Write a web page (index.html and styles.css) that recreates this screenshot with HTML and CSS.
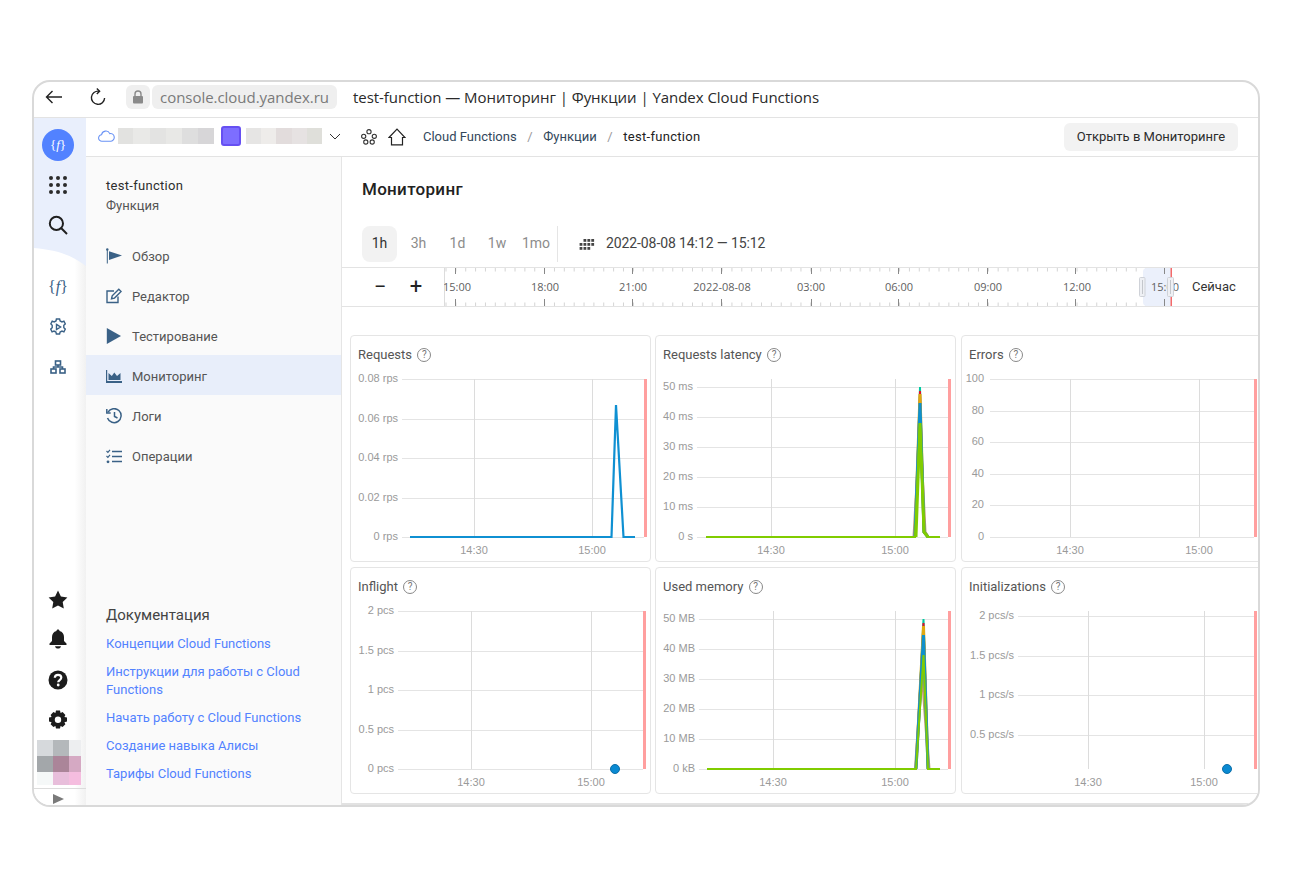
FILE: index.html
```html
<!DOCTYPE html>
<html lang="ru">
<head>
<meta charset="utf-8">
<title>test-function — Мониторинг</title>
<link rel="stylesheet" href="styles.css">
</head>
<body>
<div class="window">
  <header class="chrome">
    <svg class="chrome-back" width="18" height="14" viewBox="0 0 18 14"><path d="M17 7H1.500M7.500 1 1.500 7l6 6" class="stroke-dark"/></svg>
    <svg class="chrome-reload" width="16" height="18" viewBox="0 0 16 18"><path d="M9 3.200A6.600 6.600 0 1 0 14.600 10" class="stroke-dark"/><path d="M6.800.6 9.600 3.200 6.800 6" class="stroke-dark"/></svg>
    <span class="lock-chip"><svg width="12" height="14" viewBox="0 0 12 14"><path d="M3 6V4a3 3 0 0 1 6 0v2" fill="none" stroke="#8a8a8a" stroke-width="1.4"/><rect x="1" y="6" width="10" height="7.500" rx="1" fill="#8a8a8a"/></svg></span>
    <span class="url-chip">console.cloud.yandex.ru</span>
    <span class="tab-title">test-function — Мониторинг | Функции | Yandex Cloud Functions</span>
  </header>
  <div class="app">
    <nav class="rail">
      <svg class="rail-wave" width="52" height="150" viewBox="0 0 52 150"><path d="M0 0H52V148C36 136 22 132 0 130Z" fill="#e9effc"/></svg>
      <div class="rail-top">
        <span class="rail-logo">{<i>f</i>}</span>
        <span class="rail-item"><svg width="20" height="20" viewBox="0 0 20 20" fill="#2b2b2b"><circle cx="3" cy="3" r="2"/><circle cx="10" cy="3" r="2"/><circle cx="17" cy="3" r="2"/><circle cx="3" cy="10" r="2"/><circle cx="10" cy="10" r="2"/><circle cx="17" cy="10" r="2"/><circle cx="3" cy="17" r="2"/><circle cx="10" cy="17" r="2"/><circle cx="17" cy="17" r="2"/></svg></span>
        <span class="rail-item"><svg width="20" height="20" viewBox="0 0 20 20" fill="none" stroke="#1f1f1f" stroke-width="2"><circle cx="8.400" cy="8.400" r="6.600"/><path d="M13.300 13.300 19 19"/></svg></span>
        <span class="rail-item rail-first"><span class="rail-func">{<i>f</i>}</span></span>
        <span class="rail-item"><svg width="16" height="18" viewBox="0 0 16 18" fill="none" stroke="#3a6186" stroke-width="1.4"><path d="M6.400 1h3.200l.5 2 1.900.9 1.900-.7 1.400 2.700-1.500 1.400v2.400l1.500 1.400-1.400 2.700-1.900-.7-1.900.9-.5 2H6.400l-.5-2-1.900-.9-1.900.7-1.400-2.700 1.500-1.400V7.300L.8 5.900l1.400-2.700 1.900.7L6 3z"/><path d="M6.500 6.400 10.600 9l-4.100 2.600z"/></svg></span>
        <span class="rail-item"><svg width="16" height="14" viewBox="0 0 16 14" fill="none" stroke="#3a6186" stroke-width="1.6"><rect x="5.500" y="1" width="5" height="4"/><rect x="1" y="9" width="5" height="4"/><rect x="10" y="9" width="5" height="4"/><path d="M8 5v2M3.500 9V7h9v2"/></svg></span>
      </div>
      <div class="rail-bottom">
        <span class="rail-item"><svg width="20" height="19" viewBox="0 0 20 19" fill="#1c1c1c"><path d="m10 .6 2.900 5.900 6.500.9-4.700 4.600 1.100 6.400L10 15.400l-5.800 3 1.100-6.400L.6 7.400l6.500-.9z"/></svg></span>
        <span class="rail-item"><svg width="18" height="20" viewBox="0 0 18 20" fill="#1c1c1c"><path d="M9 .5c.9 0 1.500.6 1.500 1.400C13.500 2.600 15 5 15 8v4l2.500 2.500V16H.5v-1.500L3 12V8c0-3 1.500-5.400 4.500-6.100C7.500 1.100 8.100.5 9 .5Z"/><path d="M6 17.200h6C11.700 18.700 10.500 19.600 9 19.600s-2.700-.9-3-2.400Z"/></svg></span>
        <span class="rail-item rail-help"><svg width="20" height="20" viewBox="0 0 20 20"><circle cx="10" cy="10" r="9.500" fill="#1c1c1c"/><path d="M6.800 7.700C6.900 5.700 8.200 4.800 10 4.800c1.900 0 3.300 1.100 3.300 2.800 0 2.500-3.100 2.500-3.100 4.700" fill="none" stroke="#fff" stroke-width="2.200"/><circle cx="10.200" cy="15" r="1.400" fill="#fff"/></svg></span>
        <span class="rail-item"><svg width="20" height="20" viewBox="0 0 20 20"><path fill="#1c1c1c" d="M8 .5h4l.6 2.500 2-.9 2.800 2.800-1 2 2.600.7v4l-2.600.6 1 2.100-2.800 2.800-2-1-.6 2.400H8l-.6-2.400-2 1-2.800-2.800 1-2.100L1 11.600v-4l2.600-.7-1-2 2.800-2.800 2 .9z"/><circle cx="10" cy="9.700" r="3.200" fill="#fff"/></svg></span>
        <div class="avatar">
          <i class="a1"></i><i class="a2"></i><i class="a3"></i>
          <i class="a4"></i><i class="a5"></i><i class="a6"></i>
          <i class="a7"></i><i class="a8"></i><i class="a9"></i>
        </div>
        <div class="rail-expand"><svg width="11" height="10" viewBox="0 0 11 10"><path d="M0 0 11 5 0 10z" fill="#7a7a7a"/></svg></div>
      </div>
    </nav>
    <div class="content">
      <div class="topbar">
        <svg class="cloud" width="17" height="12" viewBox="0 0 17 12"><path d="M4 11.200A3.200 3.200 0 0 1 3.600 4.800 4.300 4.300 0 0 1 11.800 3.600 3.800 3.800 0 0 1 13 11.200Z" fill="none" stroke="#6a93f5" stroke-width="1.100"/></svg>
        <span class="blur blur-a"></span>
        <span class="folder-mark"></span>
        <span class="blur blur-b"></span>
        <svg class="chevron" width="12" height="7" viewBox="0 0 12 7"><path d="m1 1 5 5 5-5" fill="none" stroke="#333" stroke-width="1"/></svg>
        <svg class="flower" width="16" height="16" viewBox="0 0 16 16" fill="none" stroke="#333" stroke-width="1.100"><circle cx="8" cy="2.700" r="2.100"/><circle cx="2.700" cy="7.300" r="2.100"/><circle cx="13.300" cy="7.300" r="2.100"/><circle cx="4.800" cy="13" r="2.100"/><circle cx="11.200" cy="13" r="2.100"/></svg>
        <svg class="home" width="18" height="18" viewBox="0 0 18 18" fill="none" stroke="#222" stroke-width="1.200"><path d="M1 9.500 9 1.200l8 8.300h-2.500v7.300h-11V9.500Z"/></svg>
        <span class="crumb">Cloud Functions</span>
        <span class="crumb-sep">/</span>
        <span class="crumb">Функции</span>
        <span class="crumb-sep">/</span>
        <span class="crumb crumb-current">test-function</span>
        <span class="open-btn">Открыть в Мониторинге</span>
      </div>
      <div class="body">
        <aside class="sidebar">
          <div class="side-head">
            <div class="side-name">test-function</div>
            <div class="side-type">Функция</div>
          </div>
          <ul class="side-nav">
            <li class="side-item"><svg width="16" height="16" viewBox="0 0 16 16"><circle cx="1.300" cy="1.500" r="1.200" fill="#3a6186"/><path d="M.8 1.500h1v14h-1z" fill="#3a6186"/><path d="M3 3.200 16 7.500 3 12z" fill="#3a6186"/></svg>Обзор</li>
            <li class="side-item"><svg width="16" height="16" viewBox="0 0 16 16" fill="none" stroke="#3a6186" stroke-width="1.400"><path d="M12 8.500v6H1V3h7"/><path d="m5.500 10.800.7-3L12.800 1.200l2.300 2.300-6.600 6.600z"/></svg>Редактор</li>
            <li class="side-item"><svg width="16" height="16" viewBox="0 0 16 16"><path d="M.8 0 15 8 .8 16z" fill="#3a6186"/></svg>Тестирование</li>
            <li class="side-item is-active"><svg width="16" height="13" viewBox="0 0 16 13"><path d="M0 0h1.200v11H16v2H0z" fill="#3a6186"/><path d="M2.500 3 5.800 6 8.300 2.500l2.700 3.500 3.500-3v7h-12z" fill="#3a6186"/></svg>Мониторинг</li>
            <li class="side-item"><svg width="16" height="16" viewBox="0 0 16 16" fill="none" stroke="#3a6186" stroke-width="1.500"><path d="M2 4.200A7 7 0 1 1 1.500 10"/><path d="M.8 1v3.900h3.900"/><path d="M8.500 4v4.500l3 1.500"/></svg>Логи</li>
            <li class="side-item"><svg width="16" height="15" viewBox="0 0 16 15" fill="none" stroke="#3a6186" stroke-width="1.600"><path d="M6 2.500h10M6 7.500h10M6 12.500h10"/><path d="m.5 2 1.400 1.400L4 .8M.5 7l1.400 1.400L4 5.800" stroke-width="1.200"/><circle cx="2" cy="12.800" r="1.400" fill="#3a6186" stroke="none"/></svg>Операции</li>
          </ul>
          <div class="side-docs">
            <div class="docs-title">Документация</div>
            <a class="doc-link">Концепции Cloud Functions</a>
            <a class="doc-link">Инструкции для работы с Cloud Functions</a>
            <a class="doc-link">Начать работу с Cloud Functions</a>
            <a class="doc-link">Создание навыка Алисы</a>
            <a class="doc-link">Тарифы Cloud Functions</a>
          </div>
        </aside>
        <main class="main">
          <h1 class="main-title">Мониторинг</h1>
          <div class="range-row">
            <span class="range range-on">1h</span>
            <span class="range range-3h">3h</span>
            <span class="range range-1d">1d</span>
            <span class="range range-1w">1w</span>
            <span class="range range-1mo">1mo</span>
            <span class="range-sep"></span>
            <svg class="date-icon" width="16" height="11" viewBox="0 0 16 11" fill="#444"><rect x="4.500" y="0" width="2.800" height="2.800"/><rect x="8.400" y="0" width="2.800" height="2.800"/><rect x="12.300" y="0" width="2.800" height="2.800"/><rect x=".6" y="4" width="2.800" height="2.800"/><rect x="4.500" y="4" width="2.800" height="2.800"/><rect x="8.400" y="4" width="2.800" height="2.800"/><rect x="12.300" y="4" width="2.800" height="2.800"/><rect x=".6" y="8" width="2.800" height="2.800"/><rect x="4.500" y="8" width="2.800" height="2.800"/><rect x="8.400" y="8" width="2.800" height="2.800"/></svg>
            <span class="date-text">2022-08-08 14:12 — 15:12</span>
          </div>
          <div class="ruler">
            <span class="zoom-btn">−</span>
            <span class="zoom-btn zoom-plus">+</span>
            <svg class="ruler-svg" width="738" height="38" viewBox="444 268 738 38">
              <defs>
                <pattern id="minor" patternUnits="userSpaceOnUse" x="445.500" y="268" width="9.860" height="38">
                  <rect x="0" y="0" width="1" height="3.500" fill="#d4d4d4"/>
                  <rect x="0" y="34.500" width="1" height="3.500" fill="#d4d4d4"/>
                </pattern>
              </defs>
              <rect x="444" y="268" width="727" height="38" fill="url(#minor)"/>
              <rect x="444" y="268" width="1" height="38" fill="#dcdcdc"/>
              <path class="selection" d="M1147 268H1171V306H1147Q1143 306 1143 302V272Q1143 268 1147 268Z"/>
              <path class="major" d="M455.500 268v6M455.500 299v7M544.500 268v6M544.500 299v7M632.500 268v6M632.500 299v7M721.500 268v6M721.500 299v7M811.500 268v6M811.500 299v7M898.500 268v6M898.500 299v7M987.500 268v6M987.500 299v7M1075.500 268v6M1075.500 299v7M1164.500 268v6M1164.500 299v7"/>
              <text class="tick" x="457" y="291">15:00</text>
              <text class="tick" x="545" y="291">18:00</text>
              <text class="tick" x="633" y="291">21:00</text>
              <text class="tick" x="722" y="291">2022-08-08</text>
              <text class="tick" x="811" y="291">03:00</text>
              <text class="tick" x="899" y="291">06:00</text>
              <text class="tick" x="988" y="291">09:00</text>
              <text class="tick" x="1077" y="291">12:00</text>
              <text class="tick" x="1165" y="291">15:00</text>
              <rect x="1170.500" y="268" width="1.500" height="38" fill="#f46a6a"/>
              <rect class="handle" x="1139.500" y="277.500" width="5.500" height="19" rx="1"/>
              <path class="handle-line" d="M1142.500 280v14"/>
              <rect class="handle" x="1167.500" y="277.500" width="6" height="19" rx="1"/>
              <path class="handle-line" d="M1170.500 280v14"/>
            </svg>
            <span class="now">Сейчас</span>
          </div>
          <div class="charts">
            <section class="card">
              <h2 class="card-title">Requests <span class="help">?</span></h2>
              <svg class="chart" width="299" height="188" viewBox="351 373 299 188">
                <path class="gridh" d="M402 379.500H644M402 419.500H644M402 458.500H644M402 498.500H644M402 537.500H644"/>
                <path class="gridv" d="M474.500 379V537M592.500 379V537"/>
                <rect class="limit" x="644" y="379" width="3" height="158"/>
                <polyline class="line-blue" points="410,537 611.500,537 616,405 623.500,537 635,537"/>
                <text class="yl" x="398" y="382">0.08 rps</text><text class="yl" x="398" y="422">0.06 rps</text><text class="yl" x="398" y="461">0.04 rps</text><text class="yl" x="398" y="501">0.02 rps</text><text class="yl" x="398" y="540">0 rps</text>
                <text class="xl" x="474" y="554">14:30</text><text class="xl" x="592" y="554">15:00</text>
              </svg>
            </section>
            <section class="card">
              <h2 class="card-title">Requests latency <span class="help">?</span></h2>
              <svg class="chart" width="299" height="188" viewBox="656 373 299 188">
                <path class="gridh" d="M697 387.500H948M697 417.500H948M697 447.500H948M697 477.500H948M697 507.500H948M697 537.500H948"/>
                <path class="gridv" d="M771.500 379V537M895.500 379V537"/>
                <rect class="limit" x="948" y="379" width="3" height="158"/>
                <polyline class="ln" stroke="#00c9a0" points="915,537 920,387 924,532 928,537"/>
                <polyline class="ln" stroke="#e0102a" points="915,537 920,391 924,532 928,537"/>
                <polyline class="ln ln3" stroke="#e0a810" points="915,537 920,394 924,532 928,537"/>
                <polyline class="ln ln3" stroke="#c09a70" points="914,537 920,430 925,532 928,537"/>
                <polyline class="ln ln3" stroke="#0f90cc" points="915,537 920,403 924,532 928,537"/>
                <polyline class="ln ln3" stroke="#80cc00" points="916,537 920,423 924,532 928,537"/>
                <polyline class="ln" stroke="#80cc00" points="706,537 915,537 920,423 924,532 928,537 940,537"/>
                <text class="yl" x="693" y="390">50 ms</text><text class="yl" x="693" y="420">40 ms</text><text class="yl" x="693" y="450">30 ms</text><text class="yl" x="693" y="480">20 ms</text><text class="yl" x="693" y="510">10 ms</text><text class="yl" x="693" y="540">0 s</text>
                <text class="xl" x="771" y="554">14:30</text><text class="xl" x="895" y="554">15:00</text>
              </svg>
            </section>
            <section class="card">
              <h2 class="card-title">Errors <span class="help">?</span></h2>
              <svg class="chart" width="299" height="188" viewBox="962 373 299 188">
                <path class="gridh" d="M990 379.500H1254M990 411.500H1254M990 442.500H1254M990 474.500H1254M990 505.500H1254M990 537.500H1254"/>
                <path class="gridv" d="M1070.500 379V537M1199.500 379V537"/>
                <rect class="limit" x="1254" y="379" width="3" height="158"/>
                <text class="yl" x="984" y="382">100</text><text class="yl" x="984" y="414">80</text><text class="yl" x="984" y="445">60</text><text class="yl" x="984" y="477">40</text><text class="yl" x="984" y="508">20</text><text class="yl" x="984" y="540">0</text>
                <text class="xl" x="1070" y="554">14:30</text><text class="xl" x="1199" y="554">15:00</text>
              </svg>
            </section>
            <section class="card">
              <h2 class="card-title">Inflight <span class="help">?</span></h2>
              <svg class="chart" width="299" height="188" viewBox="351 605 299 188">
                <path class="gridh" d="M398 611.500H643M398 651.500H643M398 690.500H643M398 730.500H643M398 769.500H643"/>
                <path class="gridv" d="M471.500 611V769M591.500 611V769"/>
                <rect class="limit" x="643" y="611" width="3" height="158"/>
                <circle class="dot" cx="615" cy="769" r="4.500"/>
                <text class="yl" x="394" y="614">2 pcs</text><text class="yl" x="394" y="654">1.5 pcs</text><text class="yl" x="394" y="693">1 pcs</text><text class="yl" x="394" y="733">0.5 pcs</text><text class="yl" x="394" y="772">0 pcs</text>
                <text class="xl" x="471" y="786">14:30</text><text class="xl" x="591" y="786">15:00</text>
              </svg>
            </section>
            <section class="card">
              <h2 class="card-title">Used memory <span class="help">?</span></h2>
              <svg class="chart" width="299" height="188" viewBox="656 605 299 188">
                <path class="gridh" d="M699 619.500H948M699 649.500H948M699 679.500H948M699 709.500H948M699 739.500H948M699 769.500H948"/>
                <path class="gridv" d="M773.500 611V769M895.500 611V769"/>
                <rect class="limit" x="948" y="611" width="3" height="158"/>
                <polyline class="ln" stroke="#00c9a0" points="916,769 923.500,619 928,769"/>
                <polyline class="ln" stroke="#e0102a" points="916,769 923.500,623 928,769"/>
                <polyline class="ln ln3" stroke="#e0a810" points="916,769 923.500,626 928,769"/>
                <polyline class="ln ln3" stroke="#c09a70" points="915.500,769 922,670 929,769"/>
                <polyline class="ln ln3" stroke="#0f90cc" points="916,769 923.500,635 928,769"/>
                <polyline class="ln" stroke="#80cc00" stroke-width="2.500" points="707,769 916,769 923.500,655 928,769 940,769"/>
                <text class="yl" x="695" y="622">50 MB</text><text class="yl" x="695" y="652">40 MB</text><text class="yl" x="695" y="682">30 MB</text><text class="yl" x="695" y="712">20 MB</text><text class="yl" x="695" y="742">10 MB</text><text class="yl" x="695" y="772">0 kB</text>
                <text class="xl" x="773" y="786">14:30</text><text class="xl" x="895" y="786">15:00</text>
              </svg>
            </section>
            <section class="card">
              <h2 class="card-title">Initializations <span class="help">?</span></h2>
              <svg class="chart" width="299" height="188" viewBox="962 605 299 188">
                <path class="gridh" d="M1018 616.500H1254M1018 656.500H1254M1018 695.500H1254M1018 735.500H1254"/>
                <path class="gridv" d="M1088.500 611V769M1204.500 611V769"/>
                <rect class="limit" x="1254" y="611" width="3" height="158"/>
                <circle class="dot" cx="1227" cy="769" r="4.500"/>
                <text class="yl" x="1014" y="619">2 pcs/s</text><text class="yl" x="1014" y="659">1.5 pcs/s</text><text class="yl" x="1014" y="698">1 pcs/s</text><text class="yl" x="1014" y="738">0.5 pcs/s</text>
                <text class="xl" x="1088" y="786">14:30</text><text class="xl" x="1204" y="786">15:00</text>
              </svg>
            </section>
          </div>
        </main>
      </div>
    </div>
  </div>
</div>
</body>
</html>
```

FILE: styles.css
```css
* { box-sizing: border-box; }
html, body { margin: 0; padding: 0; background: #fff; }
body {
  padding: 80px 32px 0;
  font-family: Roboto, "Noto Sans", sans-serif;
  font-size: 13px;
  color: #333;
}
.window {
  width: 1228px;
  height: 727px;
  border: 2px solid #d9d9d9;
  border-radius: 18px;
  overflow: hidden;
  display: flex;
  flex-direction: column;
  background: #fff;
}
.chrome {
  height: 36px;
  flex: none;
  display: flex;
  align-items: center;
  border-bottom: 1px solid #e3e3e3;
  padding: 0 0 5px 11px;
}
.stroke-dark { fill: none; stroke: #222; stroke-width: 1.4; }
.chrome-reload { margin-left: 27px; }
.lock-chip {
  margin-left: 20px;
  width: 24px;
  height: 24px;
  border-radius: 6px;
  background: #efefef;
  display: flex;
  align-items: center;
  justify-content: center;
}
.url-chip {
  margin-left: 2px;
  width: 185px;
  height: 24px;
  border-radius: 6px;
  background: #efefef;
  color: #7a7a7a;
  font: 15px/24px "Open Sans", sans-serif;
  letter-spacing: -0.04px;
  text-align: center;
  white-space: nowrap;
}
.tab-title {
  margin-left: 16px;
  font: 15px/24px "Open Sans", sans-serif;
  letter-spacing: -0.05px;
  color: #2a2a2a;
  white-space: nowrap;
}
.app { flex: 1; display: flex; min-height: 0; }

/* rail */
.rail {
  position: relative;
  width: 52px;
  flex: none;
  display: flex;
  flex-direction: column;
  background: linear-gradient(to right, #fff 78%, #f1f1f1 100%);
}
.rail-wave { position: absolute; left: 0; top: 0; }
.rail-top {
  position: relative;
  display: flex;
  flex-direction: column;
  align-items: center;
  padding: 11px 4px 0 0;
}
.rail-logo {
  width: 32px;
  height: 32px;
  border-radius: 50%;
  background: #5282ff;
  color: #fff;
  font: 13px/31px "Liberation Serif", serif;
  text-align: center;
  margin-bottom: 4px;
}
.rail-item {
  width: 40px;
  height: 40px;
  display: flex;
  align-items: center;
  justify-content: center;
}
.rail-first { margin-top: 22px; }
.rail-help { margin-top: 1px; }
.rail-func { font: 16px/20px "Liberation Serif", serif; color: #3a6186; }
.rail-bottom {
  margin-top: auto;
  display: flex;
  flex-direction: column;
  align-items: center;
}
.rail-bottom .rail-item { margin-right: 4px; }
.avatar {
  width: 44px;
  height: 45px;
  margin-right: 2px;
  display: grid;
  grid-template-columns: 16px 16px 12px;
  grid-template-rows: 16px 16px 13px;
}
.a1 { background: #d6d9dc; }
.a2 { background: #b4b8bb; }
.a3 { background: #edeef0; }
.a4 { background: #a3a7aa; }
.a5 { background: #ab8599; }
.a6 { background: #d5a9c3; }
.a7 { background: #f5f8f8; }
.a8 { background: #e8bedb; }
.a9 { background: #f5bddf; }
.rail-expand {
  align-self: stretch;
  height: 17px;
  margin-top: 3px;
  border-top: 1px solid #dcdcdc;
  display: flex;
  align-items: center;
  justify-content: center;
  padding: 3px 4px 0 0;
}

/* top bar */
.content { flex: 1; min-width: 0; display: flex; flex-direction: column; }
.topbar {
  height: 39px;
  flex: none;
  display: flex;
  align-items: center;
  border-bottom: 1px solid #e3e3e3;
  padding: 0 0 2px 12px;
}
.blur { height: 16px; display: block; }
.blur-a {
  width: 96px;
  margin-left: 3px;
  background: linear-gradient(to right, #e2e2e0 0 16%, #e9e9e7 16% 33%, #e3e3e2 33% 50%, #e8e8e6 50% 67%, #dedede 67% 83%, #d7d6d8 83%);
}
.folder-mark {
  width: 20px;
  height: 20px;
  margin-left: 7px;
  border-radius: 3px;
  background: #7d6eff;
  border: 2px solid #6650f2;
}
.blur-b {
  width: 76px;
  margin-left: 5px;
  background: linear-gradient(to right, #e6e5e4 0 20%, #eeecea 20% 40%, #e2dcdc 40% 60%, #e6e2e2 60% 80%, #dfdfda 80%);
}
.chevron { margin-left: 7px; }
.flower { margin-left: 20px; margin-top: 1px; }
.home { margin-left: 11px; margin-top: 1px; }
.crumb { color: #33475b; white-space: nowrap; }
.home + .crumb { margin-left: 17px; }
.crumb-sep { margin: 0 10.6px; color: #999; }
.crumb-current { color: #222; letter-spacing: 0.3px; }
.open-btn {
  margin-left: auto;
  margin-right: 20px;
  margin-top: 2px;
  width: 174px;
  height: 28px;
  border-radius: 6px;
  background: #f2f2f2;
  line-height: 28px;
  text-align: center;
  color: #2c2c2c;
  white-space: nowrap;
}

/* sidebar */
.body { flex: 1; display: flex; min-height: 0; }
.sidebar {
  width: 256px;
  flex: none;
  display: flex;
  flex-direction: column;
  background: #fafafa;
  border-right: 1px solid #e5e5e5;
}
.side-head { padding: 19px 20px 0; line-height: 20px; }
.side-name { color: #2d2d2d; letter-spacing: 0.3px; }
.side-type { color: #555; }
.side-nav { list-style: none; margin: 19px 0 0; padding: 0; }
.side-item {
  height: 40px;
  padding: 2px 0 0 20px;
  display: flex;
  align-items: center;
  color: #555;
}
.side-item svg { flex: none; margin-right: 10px; }
.is-active { background: #e8eefa; }
.side-docs {
  margin-top: auto;
  padding: 0 20px 22px;
  display: flex;
  flex-direction: column;
  gap: 10px;
}
.docs-title { font-size: 15px; line-height: 20px; color: #444; }
.doc-link { color: #5282ff; line-height: 18px; }

/* main */
.main {
  flex: 1;
  min-width: 0;
  overflow: hidden;
  border-bottom: 2px solid #e2e2e2;
}
.main-title {
  margin: 22px 20px 0;
  font-size: 17px;
  line-height: 20px;
  font-weight: 500;
  letter-spacing: 0.3px;
  color: #222;
}
.range-row {
  margin: 27px 0 0 20px;
  height: 36px;
  display: flex;
  align-items: center;
}
.range { color: #8c8c8c; font-size: 14px; white-space: nowrap; text-align: center; padding-bottom: 2px; }
.range-on {
  width: 35px;
  height: 36px;
  line-height: 34px;
  background: #f2f2f2;
  border-radius: 8px;
  color: #333;
}
.range-3h { width: 43px; }
.range-1d { width: 35px; }
.range-1w { width: 44px; }
.range-1mo { width: 34px; }
.range-sep { width: 1px; height: 36px; background: #e5e5e5; margin: 0 21px 0 4px; }
.date-icon { flex: none; }
.date-text { margin-left: 11px; padding-bottom: 2px; font-size: 14px; letter-spacing: -0.1px; color: #444; white-space: nowrap; }
.ruler {
  margin-top: 5px;
  height: 40px;
  border-top: 1px solid #e3e3e3;
  border-bottom: 1px solid #e3e3e3;
  display: flex;
  align-items: center;
  padding-left: 30px;
}
.zoom-btn {
  width: 16px;
  text-align: center;
  font: 22px/24px Roboto, sans-serif;
  color: #222;
}
.zoom-plus { margin-left: 20px; }
.ruler-svg { margin-left: 20px; flex: none; display: block; }
.selection { fill: #ebf0fb; }
.major { stroke: #888; stroke-width: 1; fill: none; }
.tick { font: 11px "Open Sans", sans-serif; fill: #5f5f5f; text-anchor: middle; }
.handle { fill: #eef0f4; stroke: #cfd2d8; }
.handle-line { stroke: #c4c7cc; }
.now { margin-left: 10px; padding-bottom: 2px; color: #333; white-space: nowrap; }

/* charts */
.charts {
  margin: 28px 0 0 8px;
  display: grid;
  grid-template-columns: 305px 306px 301px;
  grid-auto-rows: 227px;
  row-gap: 5px;
  width: 912px;
}
.card {
  width: 301px;
  height: 227px;
  border: 1px solid #e5e5e5;
  border-radius: 4px;
  background: #fff;
  overflow: hidden;
}
.card-title {
  margin: 0;
  padding-left: 7px;
  height: 37px;
  display: flex;
  align-items: center;
  font-size: 13px;
  font-weight: 400;
  color: #555;
  white-space: pre;
}
.help {
  width: 14px;
  height: 14px;
  margin-left: 2px;
  border: 1px solid #888;
  border-radius: 50%;
  color: #777;
  font-size: 10px;
  line-height: 12px;
  text-align: center;
}
.chart { display: block; }
.gridh { stroke: #e4e4e4; stroke-width: 1; fill: none; }
.gridv { stroke: #dcdcdc; stroke-width: 1; fill: none; }
.limit { fill: #ff9f9f; }
.line-blue { fill: none; stroke: #0f90d2; stroke-width: 2.2; }
.ln { fill: none; stroke-width: 2; }
.ln3 { stroke-width: 3; }
.dot { fill: #0a8ad2; stroke: #0d6ea8; stroke-width: 1; }
.yl { font: 11px "Liberation Sans", sans-serif; fill: #9a9a9a; text-anchor: end; }
.xl { font: 11px "Liberation Sans", sans-serif; fill: #9a9a9a; text-anchor: middle; }
```
